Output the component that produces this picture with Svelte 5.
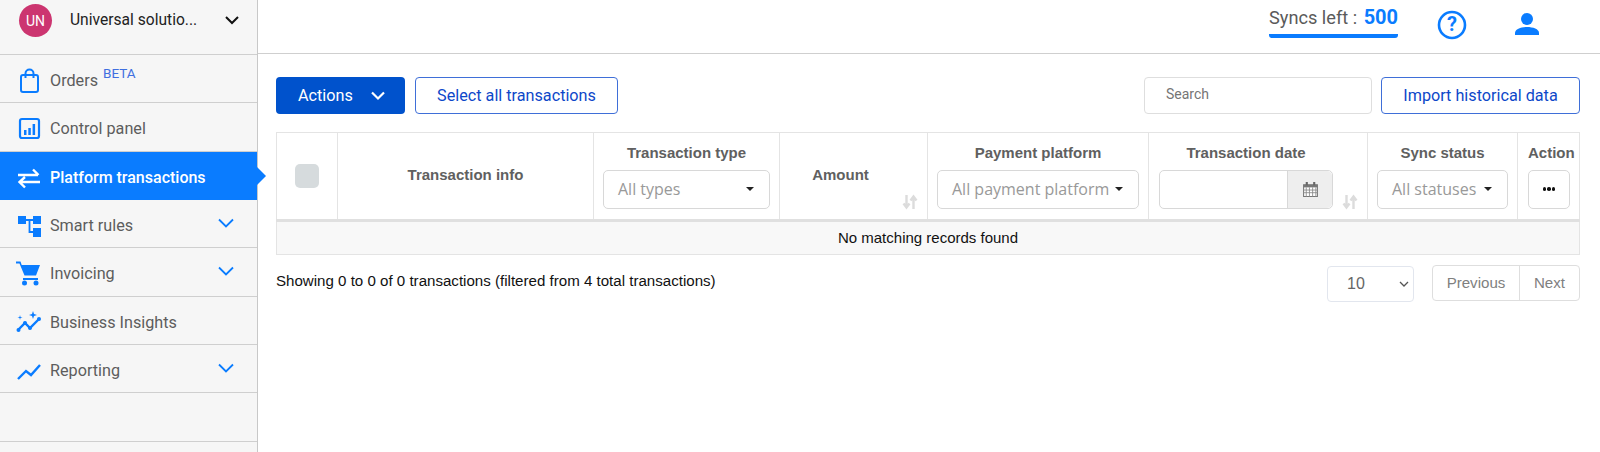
<script>
  const navItems = [
    { label: 'Orders', icon: 'bag', beta: true },
    { label: 'Control panel', icon: 'chart' },
    { label: 'Platform transactions', icon: 'swap', active: true },
    { label: 'Smart rules', icon: 'tree', caret: true },
    { label: 'Invoicing', icon: 'cart', caret: true },
    { label: 'Business Insights', icon: 'spark' },
    { label: 'Reporting', icon: 'trend', caret: true }
  ];
</script>

{#snippet sortIcon()}
  <svg class="sort" viewBox="0 0 16 16" width="16" height="16">
    <path d="M4.5 1v11M1.5 9.5l3 4 3-4M11.500 15V4M8.500 6.500l3-4 3 4" fill="none" stroke="#dcdcdc" stroke-width="2.400" />
  </svg>
{/snippet}

<div class="page">
  <aside class="sidebar">
    <div class="account">
      <span class="avatar">UN</span>
      <span class="account-name">Universal solutio...</span>
      <svg width="16" height="16" viewBox="0 0 16 16"><path d="M2 5l6 6 6-6" fill="none" stroke="#111" stroke-width="2" /></svg>
    </div>
    <nav>
      {#each navItems as item}
        <a class="nav-item" class:active={item.active} href="#top">
          <span class="nav-icon">
            <svg width="26" height="26" viewBox="0 0 26 26">
              {#if item.icon === 'bag'}
                <rect x="5" y="7" width="17" height="17" rx="2" fill="none" stroke="#0a7cff" stroke-width="2" />
                <path d="M9.500 10V5.500a4 4 0 0 1 8 0V10" fill="none" stroke="#0a7cff" stroke-width="2" />
              {:else if item.icon === 'chart'}
                <rect x="4" y="3" width="19" height="19" rx="2" fill="none" stroke="#0a7cff" stroke-width="2.200" />
                <path d="M8 14h2.500v5H8zM12.300 12h2.500v7h-2.500zM16.600 8h2.500v11h-2.500z" fill="#0a7cff" />
              {:else if item.icon === 'swap'}
                <path d="M2 10h20M17 4.500l5.500 5.500M24 17H4M9 22.500L3.500 17 9 12" fill="none" stroke="#fff" stroke-width="2.400" />
              {:else if item.icon === 'tree'}
                <path d="M2 3h8v8H2zM17 3h8v8h-8zM17 15h8v9h-8z" fill="#0a7cff" />
                <path d="M10 7h7M13.500 7v12H17" fill="none" stroke="#0a7cff" stroke-width="1.800" />
              {:else if item.icon === 'cart'}
                <path d="M0 .5h4.500l1.200 3.500H24l-4 10.500H8.500L3.500 2.500H0z" fill="#0a7cff" />
                <path d="M7 17h15v2H7z" fill="#0a7cff" />
                <circle cx="8.500" cy="22" r="2.500" fill="#0a7cff" />
                <circle cx="20" cy="22" r="2.500" fill="#0a7cff" />
              {:else if item.icon === 'spark'}
                <path d="M2 21l7-7 5 5 9-9" fill="none" stroke="#0a7cff" stroke-width="2.400" />
                <circle cx="2.500" cy="21" r="2" fill="#0a7cff" />
                <circle cx="9" cy="14" r="2" fill="#0a7cff" />
                <circle cx="14" cy="19" r="2" fill="#0a7cff" />
                <circle cx="23" cy="10" r="2" fill="#0a7cff" />
                <path d="M17 2l1 3 3 1-3 1-1 3-1-3-3-1 3-1zM4 6l.5 2 2 .5-2 .5-.5 2-.5-2-2-.5 2-.5z" fill="#0a7cff" />
              {:else}
                <path d="M2 21l8-8 5 4 9-10" fill="none" stroke="#0a7cff" stroke-width="2.400" />
              {/if}
            </svg>
          </span>
          <span class="nav-label">{item.label}{#if item.beta}<sup>BETA</sup>{/if}</span>
          {#if item.caret}
            <svg class="nav-caret" width="16" height="10" viewBox="0 0 16 10"><path d="M1 1.500l7 7 7-7" fill="none" stroke="#0a7cff" stroke-width="1.800" /></svg>
          {/if}
        </a>
      {/each}
      <div class="nav-empty"></div>
    </nav>
  </aside>

  <div class="main">
    <header class="topbar">
      <div class="syncs">
        <span class="syncs-text">Syncs left : <b>500</b></span>
      </div>
      <svg class="help" width="32" height="32" viewBox="0 0 32 32">
        <circle cx="16" cy="16" r="13" fill="none" stroke="#0a7cff" stroke-width="2.600" />
        <text x="16" y="22" text-anchor="middle" class="help-mark">?</text>
      </svg>
      <svg class="user" width="26" height="26" viewBox="0 0 26 26">
        <circle cx="13" cy="8" r="6" fill="#0a7cff" />
        <path d="M1 24v-2c0-4 6-6 12-6s12 2 12 6v2z" fill="#0a7cff" />
      </svg>
    </header>

    <div class="content">
      <div class="toolbar">
        <button class="btn primary">Actions
          <svg width="16" height="10" viewBox="0 0 16 10"><path d="M2 1.500l6 6 6-6" fill="none" stroke="#fff" stroke-width="2.200" /></svg>
        </button>
        <button class="btn outline">Select all transactions</button>
        <div class="search">Search</div>
        <button class="btn outline import">Import historical data</button>
      </div>

      <table>
        <colgroup>
          <col class="c1" /><col class="c2" /><col class="c3" /><col class="c4" /><col class="c5" /><col class="c6" /><col class="c7" /><col />
        </colgroup>
        <thead>
          <tr>
            <th><span class="check"></span></th>
            <th class="plain">Transaction info</th>
            <th>
              <div class="th-title">Transaction type</div>
              <div class="picker">All types<i class="tri"></i></div>
            </th>
            <th class="plain amount">Amount {@render sortIcon()}</th>
            <th>
              <div class="th-title">Payment platform</div>
              <div class="picker">All payment platform<i class="tri"></i></div>
            </th>
            <th class="date">
              <div class="th-title">Transaction date</div>
              <div class="date-input"><span class="date-addon">
                <svg width="17" height="17" viewBox="0 0 16 16">
                  <path d="M1.500 3.500h13v11h-13z" fill="#fff" stroke="#777" />
                  <path d="M1.500 3.500h13v2.500h-13z" fill="#777" />
                  <path d="M1 8.500h14M1 11h14M4 6v9M7 6v9M10 6v9M13 6v9" stroke="#888" stroke-width=".8" />
                  <path d="M4.500 1v3M11.500 1v3" stroke="#666" stroke-width="2" />
                </svg>
              </span></div>
              {@render sortIcon()}
            </th>
            <th>
              <div class="th-title">Sync status</div>
              <div class="picker">All statuses<i class="tri"></i></div>
            </th>
            <th class="action">
              <div class="th-title">Action</div>
              <div class="dots"><span></span><span></span><span></span></div>
            </th>
          </tr>
        </thead>
        <tbody>
          <tr><td colspan="8">No matching records found</td></tr>
        </tbody>
      </table>

      <div class="footer">
        <span class="info">Showing 0 to 0 of 0 transactions (filtered from 4 total transactions)</span>
        <div class="page-size">10
          <svg width="10" height="6" viewBox="0 0 10 6"><path d="M1 1l4 4 4-4" fill="none" stroke="#555" stroke-width="1.300" /></svg>
        </div>
        <div class="pager"><span>Previous</span><span>Next</span></div>
      </div>
    </div>
  </div>
</div>

<style>
  :global(body) {
    margin: 0;
    background: #fff;
  }

  .page {
    display: flex;
    height: 452px;
    overflow: hidden;
    font-family: Roboto, sans-serif;
  }

  .sidebar {
    width: 257px;
    flex: none;
    background: #f6f6f6;
    border-right: 1px solid #c8c8c8;
  }

  .account {
    height: 55px;
    box-sizing: border-box;
    border-bottom: 1px solid #cfcfcf;
    display: flex;
    align-items: flex-start;
    padding: 4px 17px 0 19px;
    font-size: 15.600px;
    color: #222;
  }

  .account svg {
    margin: 8px 0 0 auto;
  }

  .avatar {
    width: 33px;
    height: 33px;
    border-radius: 50%;
    background: #cc3570;
    color: #fff;
    font-size: 14px;
    display: flex;
    align-items: center;
    justify-content: center;
    flex: none;
  }

  .account-name {
    margin: 7px 0 0 18px;
  }

  .nav-item {
    height: 48.330px;
    box-sizing: border-box;
    border-bottom: 1px solid #cfcfcf;
    display: flex;
    align-items: center;
    padding: 4px 23px 0 16px;
    color: #5d5d5d;
    font-size: 16.200px;
    text-decoration: none;
    position: relative;
  }

  .nav-item.active {
    background: #0a7cff;
    color: #fff;
    border-bottom: 0;
    font-size: 16px;
    font-weight: 500;
  }

  .nav-item.active::after {
    content: "";
    position: absolute;
    left: 100%;
    top: 15px;
    border-left: 9px solid #0a7cff;
    border-top: 9px solid transparent;
    border-bottom: 9px solid transparent;
  }

  .nav-icon {
    width: 34px;
    height: 26px;
    flex: none;
  }

  .nav-label sup {
    color: #3f6fe0;
    font-size: 13.500px;
    margin-left: 5px;
    position: relative;
    top: -2px;
    line-height: 0;
    vertical-align: super;
  }

  .nav-caret {
    margin-left: auto;
    margin-top: -5px;
  }

  .nav-empty {
    height: 47.330px;
    border-bottom: 1px solid #cfcfcf;
  }

  .main {
    flex: 1;
    min-width: 0;
  }

  .topbar {
    height: 53px;
    border-bottom: 1px solid #cfcfcf;
    display: flex;
    align-items: flex-start;
    padding-right: 60px;
    justify-content: flex-end;
  }

  .syncs {
    width: 129px;
    margin: 5px 1px 0 0;
    height: 29px;
    border-bottom: 4px solid #0a7cff;
    border-radius: 0 0 3px 3px;
    white-space: nowrap;
    box-sizing: content-box;
  }

  .syncs-text {
    font-size: 18.200px;
    color: #5a5a5a;
  }

  .syncs-text b {
    font-size: 20px;
    margin-left: 2px;
    color: #0a7cff;
  }

  .help {
    margin: 9px 0 0 37px;
  }

  .user {
    margin: 11px 0 0 46px;
  }

  .content {
    padding: 23px 20px 0 18px;
  }

  .toolbar {
    display: flex;
    gap: 10px;
    height: 37px;
    margin-bottom: 18px;
  }

  .btn {
    font: 16.200px Roboto, sans-serif;
    border-radius: 4px;
    padding: 0;
    height: 37px;
    box-sizing: border-box;
  }

  .primary {
    width: 129px;
    background: #0052cc;
    border: 0;
    color: #fff;
    display: flex;
    align-items: center;
    padding-left: 22px;
    gap: 17px;
  }

  .outline {
    width: 203px;
    background: #fff;
    border: 1px solid #3f6fd8;
    color: #0d47c9;
  }

  .search {
    margin-left: auto;
    width: 228px;
    height: 37px;
    box-sizing: border-box;
    border: 1px solid #dedede;
    border-radius: 4px;
    padding: 0 21px;
    line-height: 33px;
    font-size: 14px;
    color: #757575;
  }

  .import {
    width: 199px;
    margin-left: -1px;
  }

  table {
    width: 1304px;
    table-layout: fixed;
    border-collapse: collapse;
    border: 1px solid #e4e4e4;
    font-family: "Liberation Sans", sans-serif;
  }

  .c1 { width: 61px; }
  .c2 { width: 256px; }
  .c3 { width: 186px; }
  .c4 { width: 148px; }
  .c5 { width: 221px; }
  .c6 { width: 219px; }
  .c7 { width: 150px; }

  th {
    height: 88px;
    padding: 0;
    box-sizing: border-box;
    border-left: 1px solid #e4e4e4;
    border-bottom: 3px solid #e0e0e0;
    font-size: 15px;
    font-weight: 700;
    color: #606060;
    position: relative;
    vertical-align: middle;
    text-align: center;
  }

  th.plain {
    padding-bottom: 3px;
  }

  th.amount {
    padding-right: 26px;
  }

  .check {
    display: block;
    width: 24px;
    height: 24px;
    margin: 0 auto;
    border-radius: 5px;
    background: #d6dbdd;
  }

  .th-title {
    margin-bottom: 9px;
  }

  .picker {
    margin: 0 9px;
    height: 39px;
    box-sizing: border-box;
    border: 1px solid #d8d8d8;
    border-radius: 5px;
    display: flex;
    align-items: center;
    justify-content: space-between;
    padding: 0 15px 0 14px;
    color: #999;
    font: 16px "Open Sans", sans-serif;
    white-space: nowrap;
  }

  .tri {
    width: 0;
    border-top: 4px solid #222;
    border-left: 4px solid transparent;
    border-right: 4px solid transparent;
  }

  .sort {
    position: absolute;
    right: 9px;
    bottom: 9px;
  }

  .date .th-title {
    margin: 0 34px 9px 10px;
  }

  .date-input {
    margin: 0 34px 0 10px;
    height: 39px;
    box-sizing: border-box;
    border: 1px solid #d8d8d8;
    border-radius: 5px;
    display: flex;
    justify-content: flex-end;
  }

  .date-addon {
    width: 44px;
    background: #eee;
    border-left: 1px solid #d8d8d8;
    border-radius: 0 5px 5px 0;
    display: flex;
    align-items: center;
    justify-content: center;
  }

  .action {
    text-align: left;
    padding-left: 10px;
  }

  .dots {
    width: 42px;
    height: 39px;
    box-sizing: border-box;
    border: 1px solid #d8d8d8;
    border-radius: 5px;
    display: flex;
    align-items: center;
    justify-content: center;
    gap: 1px;
  }

  .dots span {
    width: 3.500px;
    height: 3.500px;
    border-radius: 50%;
    background: #111;
  }

  td {
    height: 34px;
    padding: 0 0 2px;
    box-sizing: border-box;
    background: #f8f8f8;
    text-align: center;
    font-size: 15px;
    color: #111;
  }

  .footer {
    display: flex;
    align-items: flex-start;
    margin-top: 10px;
    font-family: "Liberation Sans", sans-serif;
    font-size: 15.100px;
  }

  .info {
    margin-top: 7px;
    color: #111;
  }

  .page-size {
    margin: 1px 18px 0 auto;
    width: 87px;
    height: 36px;
    box-sizing: border-box;
    border: 1px solid #e2e6ee;
    border-radius: 4px;
    padding: 0 4px 0 19px;
    display: flex;
    align-items: center;
    justify-content: space-between;
    font-size: 16px;
    color: #666;
  }

  .pager {
    display: flex;
    width: 148px;
    height: 36px;
    box-sizing: border-box;
    border: 1px solid #dedede;
    border-radius: 4px;
    color: #808080;
    line-height: 34px;
    text-align: center;
  }

  .pager span:first-child {
    width: 86px;
    border-right: 1px solid #dedede;
  }

  .pager span:last-child {
    flex: 1;
  }

  .help-mark {
    font: 700 20px Roboto, sans-serif;
    fill: #0a7cff;
  }
</style>
